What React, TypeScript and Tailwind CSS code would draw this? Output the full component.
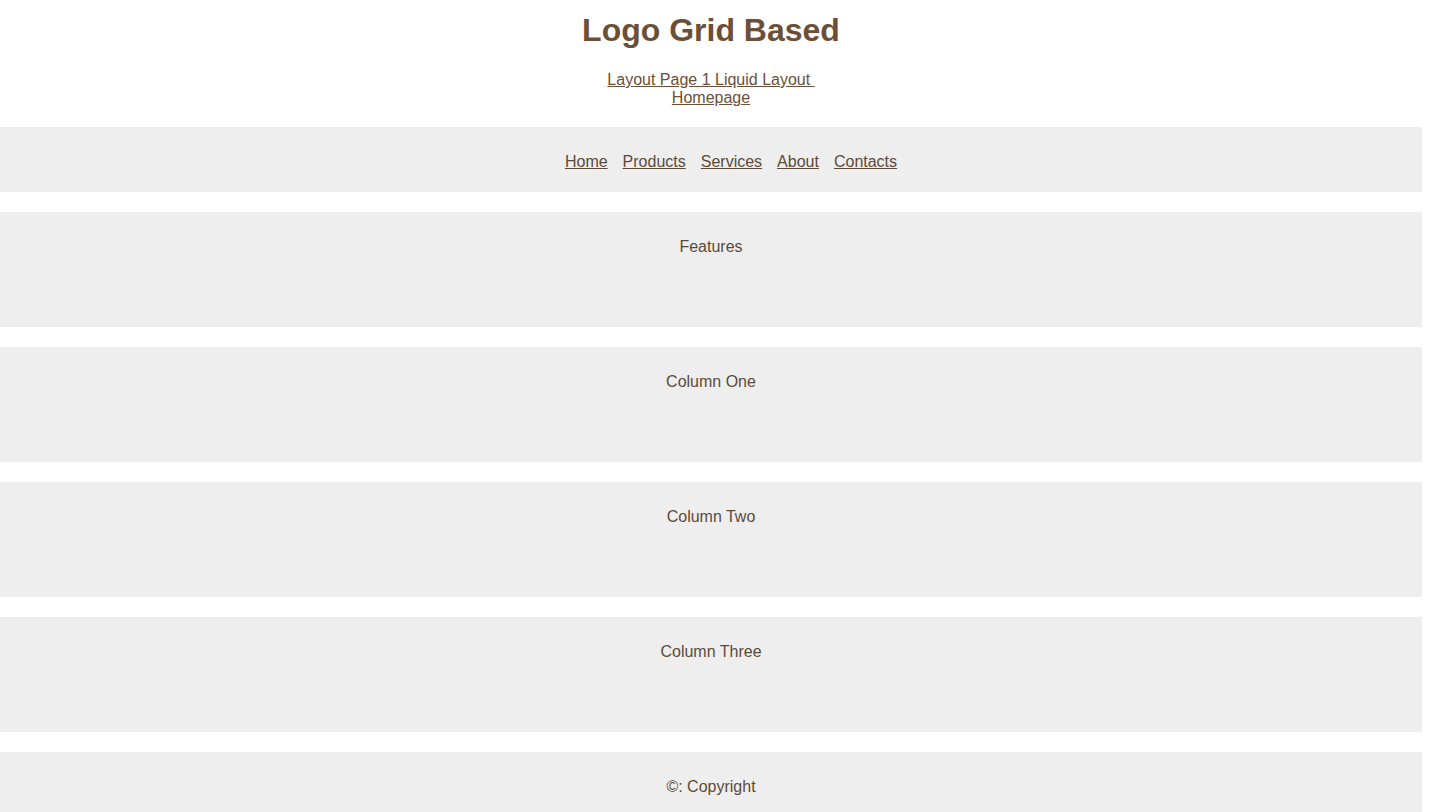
const NAV = ["Home", "Products", "Services", "About", "Contacts"];
const BLOCKS = ["Features", "Column One", "Column Two", "Column Three"];

export default function App() {
  return (
    <div className="h-[812px] w-[1422px] overflow-hidden bg-white text-center font-['Liberation_Sans',Arial,sans-serif] text-[16px] text-[#5c4a39]">
      <header className="pt-[12px]">
        <h1 className="text-[32px] font-bold leading-[37px] text-[#6b4f37]">Logo Grid Based</h1>
        <a href="#" className="mt-[22px] block leading-[18px] text-[#6b4f37] underline">
          Layout Page 1 Liquid Layout&nbsp;
          <br />
          Homepage
        </a>
      </header>

      <nav className="mt-[20px] flex h-[65px] items-center justify-center gap-[15px] bg-[#eeeeee] pl-[40px] pt-[5px]">
        {NAV.map((n) => (
          <a key={n} href="#" className="leading-[18px] text-[#5c4a39] underline">
            {n}
          </a>
        ))}
      </nav>

      {BLOCKS.map((b) => (
        <section key={b} className="mt-[20px] h-[115px] bg-[#eeeeee] pt-[26px] leading-[18px]">
          {b}
        </section>
      ))}

      <footer className="mt-[20px] h-[80px] bg-[#eeeeee] pt-[26px] leading-[18px]">©: Copyright</footer>
    </div>
  );
}
